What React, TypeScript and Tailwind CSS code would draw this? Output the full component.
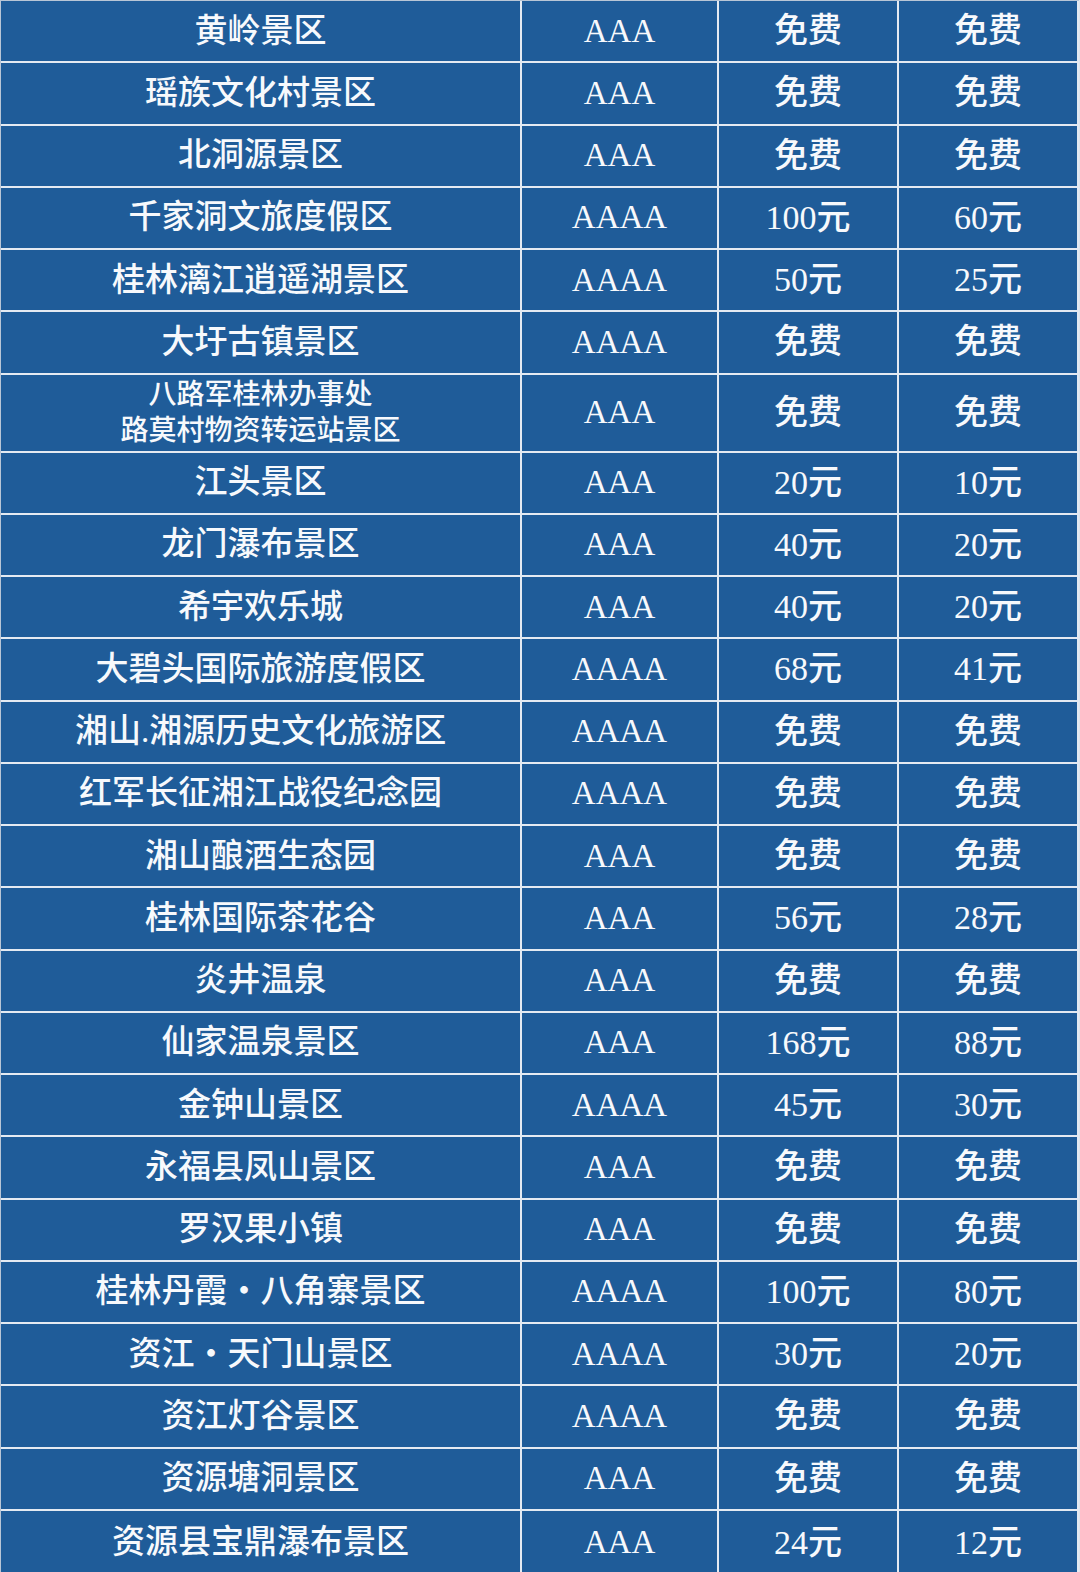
const ROWS: { name: string | string[]; level: string; full: string; half: string }[] = [
  { name: '黄岭景区', level: 'AAA', full: '免费', half: '免费' },
  { name: '瑶族文化村景区', level: 'AAA', full: '免费', half: '免费' },
  { name: '北洞源景区', level: 'AAA', full: '免费', half: '免费' },
  { name: '千家洞文旅度假区', level: 'AAAA', full: '100元', half: '60元' },
  { name: '桂林漓江逍遥湖景区', level: 'AAAA', full: '50元', half: '25元' },
  { name: '大圩古镇景区', level: 'AAAA', full: '免费', half: '免费' },
  { name: ['八路军桂林办事处', '路莫村物资转运站景区'], level: 'AAA', full: '免费', half: '免费' },
  { name: '江头景区', level: 'AAA', full: '20元', half: '10元' },
  { name: '龙门瀑布景区', level: 'AAA', full: '40元', half: '20元' },
  { name: '希宇欢乐城', level: 'AAA', full: '40元', half: '20元' },
  { name: '大碧头国际旅游度假区', level: 'AAAA', full: '68元', half: '41元' },
  { name: '湘山.湘源历史文化旅游区', level: 'AAAA', full: '免费', half: '免费' },
  { name: '红军长征湘江战役纪念园', level: 'AAAA', full: '免费', half: '免费' },
  { name: '湘山酿酒生态园', level: 'AAA', full: '免费', half: '免费' },
  { name: '桂林国际茶花谷', level: 'AAA', full: '56元', half: '28元' },
  { name: '炎井温泉', level: 'AAA', full: '免费', half: '免费' },
  { name: '仙家温泉景区', level: 'AAA', full: '168元', half: '88元' },
  { name: '金钟山景区', level: 'AAAA', full: '45元', half: '30元' },
  { name: '永福县凤山景区', level: 'AAA', full: '免费', half: '免费' },
  { name: '罗汉果小镇', level: 'AAA', full: '免费', half: '免费' },
  { name: '桂林丹霞・八角寨景区', level: 'AAAA', full: '100元', half: '80元' },
  { name: '资江・天门山景区', level: 'AAAA', full: '30元', half: '20元' },
  { name: '资江灯谷景区', level: 'AAAA', full: '免费', half: '免费' },
  { name: '资源塘洞景区', level: 'AAA', full: '免费', half: '免费' },
  { name: '资源县宝鼎瀑布景区', level: 'AAA', full: '24元', half: '12元' },
];

const cell = 'flex items-center justify-center border-r-2 border-[#e4eaf2] text-center';

export default function App() {
  return (
    <div
      className="w-[1080px] h-[1572px] overflow-hidden bg-[#dfe6ee] text-[#f7f9fc]"
      style={{ fontFamily: '"Liberation Serif", "Noto Sans CJK SC", serif' }}
    >
      <div className="w-[1079px] h-full border-l border-t border-[#b9c6d6] bg-[#1f5c99]">
        {ROWS.map((r, i) => {
          const two = Array.isArray(r.name);
          const last = i === ROWS.length - 1;
          return (
            <div
              key={i}
              className={`flex ${last ? 'h-[64px]' : 'border-b-2 border-[#e4eaf2]'} ${
                two ? 'h-[78px]' : last ? '' : 'h-[62.25px]'
              }`}
            >
              <div className={`${cell} w-[521px] flex-col`}>
                {two ? (
                  (r.name as string[]).map((line) => (
                    <span key={line} className="block text-[28px] leading-[36px] font-medium">
                      {line}
                    </span>
                  ))
                ) : (
                  <span className="text-[33px] leading-none font-medium">{r.name as string}</span>
                )}
              </div>
              <div className={`${cell} w-[197px] text-[33px] leading-none font-medium`}>{r.level}</div>
              <div className={`${cell} w-[180px] text-[34px] leading-none font-medium`}>{r.full}</div>
              <div className={`${cell} w-[180px] text-[34px] leading-none font-medium`}>{r.half}</div>
            </div>
          );
        })}
      </div>
    </div>
  );
}
